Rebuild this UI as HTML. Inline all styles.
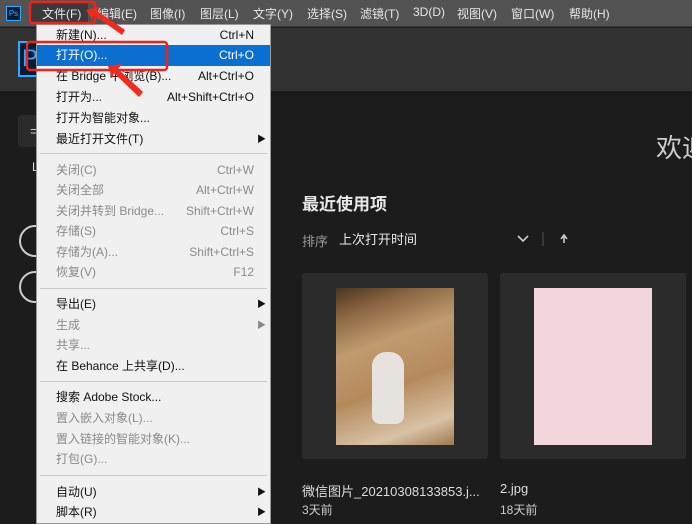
<!DOCTYPE html>
<html><head><meta charset="utf-8"><style>
*{margin:0;padding:0;box-sizing:border-box}
body{width:692px;height:519px;overflow:hidden;background:#1c1c1c;font-family:"Liberation Sans","Noto Sans CJK SC",sans-serif;position:relative;color:#ddd}
.mb{position:absolute;left:0;top:0;width:692px;height:27px;background:#535353;border-bottom:1px solid #3a3a3a}
.mb span{position:absolute;top:5px;font-size:12px;color:#e6e6e6;white-space:nowrap}
.hd{position:absolute;left:0;top:28px;width:692px;height:63px;background:#323232}
.menu{position:absolute;left:36px;top:24px;width:235px;height:500px;background:#f0f0f0;border:1px solid #999;font-size:12px}
.it{position:absolute;left:0;width:233px;height:21px;line-height:21px;color:#111;white-space:nowrap}
.it .l{position:absolute;left:19px}
.it .r{position:absolute;right:16px}
.it .a{position:absolute;right:4px;top:0;font-size:9px}
.d{color:#8a8a8a}
.sep{position:absolute;left:3px;width:227px;height:1px;background:#c8c8c8}
.hl{background:#0a6fd0;color:#fff}
</style></head><body>
<div class="mb">
<div style="position:absolute;left:30px;top:2px;width:58px;height:22px;background:#3a3a3a"></div>
<div style="position:absolute;left:6px;top:6px;width:15px;height:15px;background:#001e36;border:1px solid #31a8ff;color:#31a8ff;font-size:8px;line-height:13px;text-align:center">Ps</div>
<span style="left:42px;">文件(F)</span>
<span style="left:97px">编辑(E)</span>
<span style="left:150px">图像(I)</span>
<span style="left:200px">图层(L)</span>
<span style="left:253px">文字(Y)</span>
<span style="left:307px">选择(S)</span>
<span style="left:360px">滤镜(T)</span>
<span style="left:413px">3D(D)</span>
<span style="left:457px">视图(V)</span>
<span style="left:511px">窗口(W)</span>
<span style="left:569px">帮助(H)</span>
</div>
<div class="hd"></div>
<div style="position:absolute;left:18px;top:41px;width:22px;height:36px;border:2px solid #31a8ff;background:#001e36;color:#31a8ff;font-size:24px;line-height:32px;padding-left:2px">P</div>
<div style="position:absolute;left:18px;top:115px;width:30px;height:32px;background:#2b2b2b;border-radius:4px;color:#ccc;font-size:14px;line-height:32px;padding-left:12px">=</div>
<div style="position:absolute;left:32px;top:160px;color:#ddd;font-size:12px">L</div>
<div style="position:absolute;left:19px;top:225px;width:34px;height:32px;border:2px solid #ccc;border-radius:16px"></div>
<div style="position:absolute;left:19px;top:271px;width:34px;height:32px;border:2px solid #ccc;border-radius:16px"></div>
<div style="position:absolute;left:656px;top:128px;font-size:26px;color:#ccc;white-space:nowrap">欢迎</div>
<div style="position:absolute;left:302px;top:190px;font-size:17px;color:#e8e8e8;font-weight:bold">最近使用项</div>
<div style="position:absolute;left:302px;top:231px;font-size:13px;color:#999">排序</div>
<div style="position:absolute;left:339px;top:229px;font-size:13px;color:#e8e8e8">上次打开时间</div>
<svg style="position:absolute;left:516px;top:232px" width="60" height="14"><path d="M2 4l5 5 5-5" stroke="#ccc" stroke-width="1.6" fill="none"/><line x1="27" y1="0" x2="27" y2="14" stroke="#555"/><path d="M48 11V4M45 7l3-4 3 4" stroke="#ccc" stroke-width="1.6" fill="none"/></svg>
<div style="position:absolute;left:302px;top:273px;width:186px;height:186px;background:#2b2b2b;border-radius:3px"></div>
<div style="position:absolute;left:500px;top:273px;width:186px;height:186px;background:#2b2b2b;border-radius:3px"></div>
<div style="position:absolute;left:336px;top:288px;width:118px;height:157px;background:linear-gradient(160deg,#4a3520 0%,#8a6440 15%,#c09a6e 35%,#b48a5c 60%,#d8c2a6 85%,#a07850 100%)"></div>
<div style="position:absolute;left:372px;top:352px;width:32px;height:72px;background:#e6e2de;border-radius:14px 14px 8px 8px"></div>
<div style="position:absolute;left:534px;top:288px;width:118px;height:157px;background:#f2d6dc"></div>
<div style="position:absolute;left:302px;top:481px;font-size:13px;color:#ddd">微信图片_20210308133853.j...</div>
<div style="position:absolute;left:500px;top:481px;font-size:13px;color:#ddd">2.jpg</div>
<div style="position:absolute;left:302px;top:501px;font-size:12px;color:#ccc">3天前</div>
<div style="position:absolute;left:500px;top:501px;font-size:12px;color:#ccc">18天前</div>

<div class="menu">
<div class="it" style="top:0px"><span class="l">新建(N)...</span><span class="r">Ctrl+N</span></div>
<div class="it hl" style="top:20px"><span class="l">打开(O)...</span><span class="r">Ctrl+O</span></div>
<div class="it" style="top:41px"><span class="l">在 Bridge 中浏览(B)...</span><span class="r">Alt+Ctrl+O</span></div>
<div class="it" style="top:62px"><span class="l">打开为...</span><span class="r">Alt+Shift+Ctrl+O</span></div>
<div class="it" style="top:83px"><span class="l">打开为智能对象...</span></div>
<div class="it" style="top:104px"><span class="l">最近打开文件(T)</span><span class="a">▶</span></div>
<div class="sep" style="top:128px"></div>
<div class="it d" style="top:135px"><span class="l">关闭(C)</span><span class="r">Ctrl+W</span></div>
<div class="it d" style="top:155px"><span class="l">关闭全部</span><span class="r">Alt+Ctrl+W</span></div>
<div class="it d" style="top:176px"><span class="l">关闭并转到 Bridge...</span><span class="r">Shift+Ctrl+W</span></div>
<div class="it d" style="top:196px"><span class="l">存储(S)</span><span class="r">Ctrl+S</span></div>
<div class="it d" style="top:217px"><span class="l">存储为(A)...</span><span class="r">Shift+Ctrl+S</span></div>
<div class="it d" style="top:237px"><span class="l">恢复(V)</span><span class="r">F12</span></div>
<div class="sep" style="top:263px"></div>
<div class="it" style="top:269px"><span class="l">导出(E)</span><span class="a">▶</span></div>
<div class="it d" style="top:290px"><span class="l">生成</span><span class="a">▶</span></div>
<div class="it d" style="top:310px"><span class="l">共享...</span></div>
<div class="it" style="top:331px"><span class="l">在 Behance 上共享(D)...</span></div>
<div class="sep" style="top:356px"></div>
<div class="it" style="top:362px"><span class="l">搜索 Adobe Stock...</span></div>
<div class="it d" style="top:383px"><span class="l">置入嵌入对象(L)...</span></div>
<div class="it d" style="top:404px"><span class="l">置入链接的智能对象(K)...</span></div>
<div class="it d" style="top:424px"><span class="l">打包(G)...</span></div>
<div class="sep" style="top:450px"></div>
<div class="it" style="top:457px"><span class="l">自动(U)</span><span class="a">▶</span></div>
<div class="it" style="top:477px"><span class="l">脚本(R)</span><span class="a">▶</span></div>
</div>

<svg style="position:absolute;left:0;top:0" width="692" height="519">
<rect x="30" y="2" width="65" height="21" rx="2" fill="none" stroke="#f0201a" stroke-width="2.5"/>
<rect x="27" y="42" width="140" height="28" rx="3" fill="none" stroke="#f0201a" stroke-width="2.5"/>
<polygon points="86,10 100,7 97,11 125,30 122,35 94,15 92,19" fill="#f02a1e"/>
<polygon points="108,66 122,64 118,69 143,92 139,97 114,73 112,78" fill="#f02a1e"/>
</svg>
</body></html>
